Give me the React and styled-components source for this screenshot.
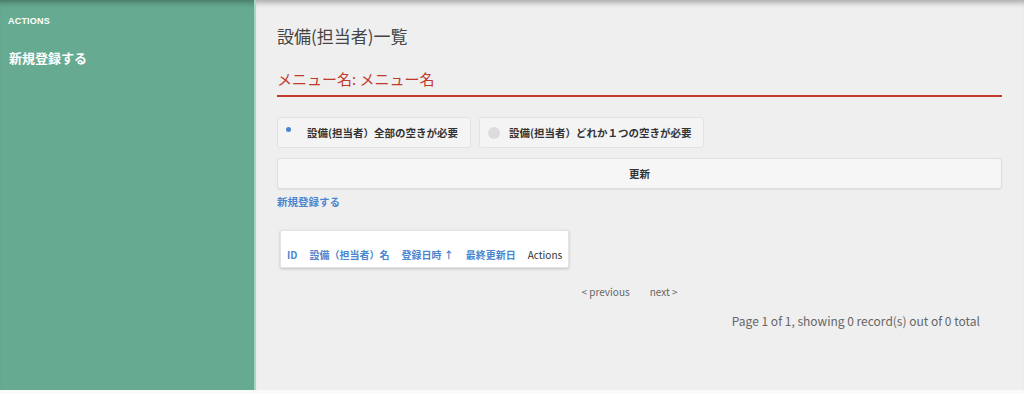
import React, { useState } from "react";
import styled, { createGlobalStyle } from "styled-components";

const GlobalStyle = createGlobalStyle`
  html, body {
    margin: 0;
    padding: 0;
    background: #fafafa;
  }
  body {
    font-family: "Noto Sans CJK JP", "Liberation Sans", sans-serif;
  }
`;

const COLUMNS = [
  { id: "id", label: "ID", link: true },
  { id: "name", label: "設備（担当者）名", link: true },
  { id: "created", label: "登録日時 ↑", link: true },
  { id: "updated", label: "最終更新日", link: true },
  { id: "actions", label: "Actions", link: false },
];

const OPTIONS = [
  { id: "all", label: "設備(担当者）全部の空きが必要" },
  { id: "any", label: "設備(担当者）どれか１つの空きが必要" },
];

function App() {
  const [mode, setMode] = useState("all");

  return (
    <>
      <GlobalStyle />
      <Page>
        <Sidebar>
          <SideTitle>Actions</SideTitle>
          <SideLink href="#">新規登録する</SideLink>
        </Sidebar>
        <Main>
          <Title>設備(担当者)一覧</Title>
          <MenuName>メニュー名: メニュー名</MenuName>
          <RadioRow>
            {OPTIONS.map((opt) => (
              <RadioBox key={opt.id} onClick={() => setMode(opt.id)}>
                <RadioMark $checked={mode === opt.id} />
                {opt.label}
              </RadioBox>
            ))}
          </RadioRow>
          <UpdateButton>更新</UpdateButton>
          <NewLink href="#">新規登録する</NewLink>
          <TableCard>
            <Table>
              <thead>
                <tr>
                  {COLUMNS.map((col) => (
                    <Th key={col.id} $link={col.link}>
                      {col.label}
                    </Th>
                  ))}
                </tr>
              </thead>
            </Table>
          </TableCard>
          <Pager>
            <PagerLink>&lt; previous</PagerLink>
            <PagerLink>next &gt;</PagerLink>
          </Pager>
          <PageInfo>Page 1 of 1, showing 0 record(s) out of 0 total</PageInfo>
        </Main>
      </Page>
    </>
  );
}

const topShadow = "inset 0 7px 6px -5px rgba(0, 0, 0, 0.35)";

const Page = styled.div`
  display: flex;
  height: 390px;
`;

const Sidebar = styled.aside`
  width: 256px;
  flex-shrink: 0;
  background: #66ab91;
  border-right: 2px solid #a5d8c2;
  box-shadow: ${topShadow};
  padding: 15px 8px;
  box-sizing: border-box;
  color: #fff;
`;

const SideTitle = styled.div`
  font-family: "Liberation Sans", sans-serif;
  font-size: 9px;
  font-weight: bold;
  text-transform: uppercase;
  letter-spacing: 0.2px;
  line-height: 12px;
`;

const SideLink = styled.a`
  display: block;
  margin-top: 23px;
  padding-left: 1px;
  font-size: 13px;
  font-weight: bold;
  color: #fff;
  text-decoration: none;
  line-height: 16px;
`;

const Main = styled.main`
  flex: 1;
  background: #efefef;
  box-shadow: ${topShadow};
  padding: 24px 22px 0 21px;
  display: flex;
  flex-direction: column;
  align-items: stretch;
`;

const Title = styled.h1`
  margin: 0;
  font-size: 17px;
  font-weight: normal;
  color: #444;
  line-height: 23px;
`;

const MenuName = styled.h2`
  margin: 22px 0 0;
  padding-bottom: 6px;
  font-size: 15px;
  font-weight: normal;
  color: #c0392b;
  line-height: 20px;
  border-bottom: 2px solid #c0392b;
`;

const RadioRow = styled.div`
  display: flex;
  gap: 8px;
  margin-top: 20px;
`;

const RadioBox = styled.label`
  display: flex;
  align-items: center;
  height: 31px;
  box-sizing: border-box;
  padding: 0 12px 0 8px;
  background: #f4f4f4;
  border: 1px solid #e2e2e2;
  border-radius: 3px;
  font-size: 10.5px;
  font-weight: bold;
  color: #333;
  cursor: pointer;
`;

const RadioMark = styled.span`
  position: relative;
  width: 12px;
  height: 12px;
  margin-right: 9px;
  border-radius: 50%;
  background: ${(p) => (p.$checked ? "transparent" : "#dcdcdc")};

  &::after {
    content: "";
    position: absolute;
    left: 0;
    top: 0;
    width: 5px;
    height: 5px;
    border-radius: 50%;
    background: #4a86cf;
    display: ${(p) => (p.$checked ? "block" : "none")};
  }
`;

const UpdateButton = styled.button`
  margin-top: 10px;
  height: 31px;
  background: #f6f6f6;
  border: 1px solid #dedede;
  border-radius: 3px;
  box-shadow: 0 1px 1px rgba(0, 0, 0, 0.06);
  font-family: inherit;
  font-size: 10.5px;
  font-weight: bold;
  color: #333;
  cursor: pointer;
`;

const NewLink = styled.a`
  align-self: flex-start;
  margin-top: 6px;
  font-size: 10.5px;
  font-weight: bold;
  color: #4a86cf;
  text-decoration: none;
  line-height: 14px;
`;

const TableCard = styled.div`
  align-self: flex-start;
  margin: 21px 0 0 3px;
  background: #fff;
  border: 1px solid #e4e4e4;
  border-radius: 2px;
  box-shadow: 0 1px 3px rgba(0, 0, 0, 0.2);
  padding: 16px 0 4px;
`;

const Table = styled.table`
  border-collapse: collapse;
`;

const Th = styled.th`
  padding: 0 6px;
  font-size: 10px;
  font-weight: ${(p) => (p.$link ? "bold" : "normal")};
  color: ${(p) => (p.$link ? "#4a86cf" : "#333")};
  text-align: left;
  white-space: nowrap;
  line-height: 16px;
`;

const Pager = styled.div`
  display: flex;
  justify-content: center;
  gap: 20px;
  margin-top: 17px;
  padding-right: 20px;
`;

const PagerLink = styled.span`
  font-size: 10px;
  color: #666;
  cursor: pointer;
  line-height: 14px;
`;

const PageInfo = styled.div`
  align-self: flex-end;
  margin-top: 14px;
  padding-right: 22px;
  font-size: 12px;
  color: #666;
  line-height: 16px;
`;

export default App;
